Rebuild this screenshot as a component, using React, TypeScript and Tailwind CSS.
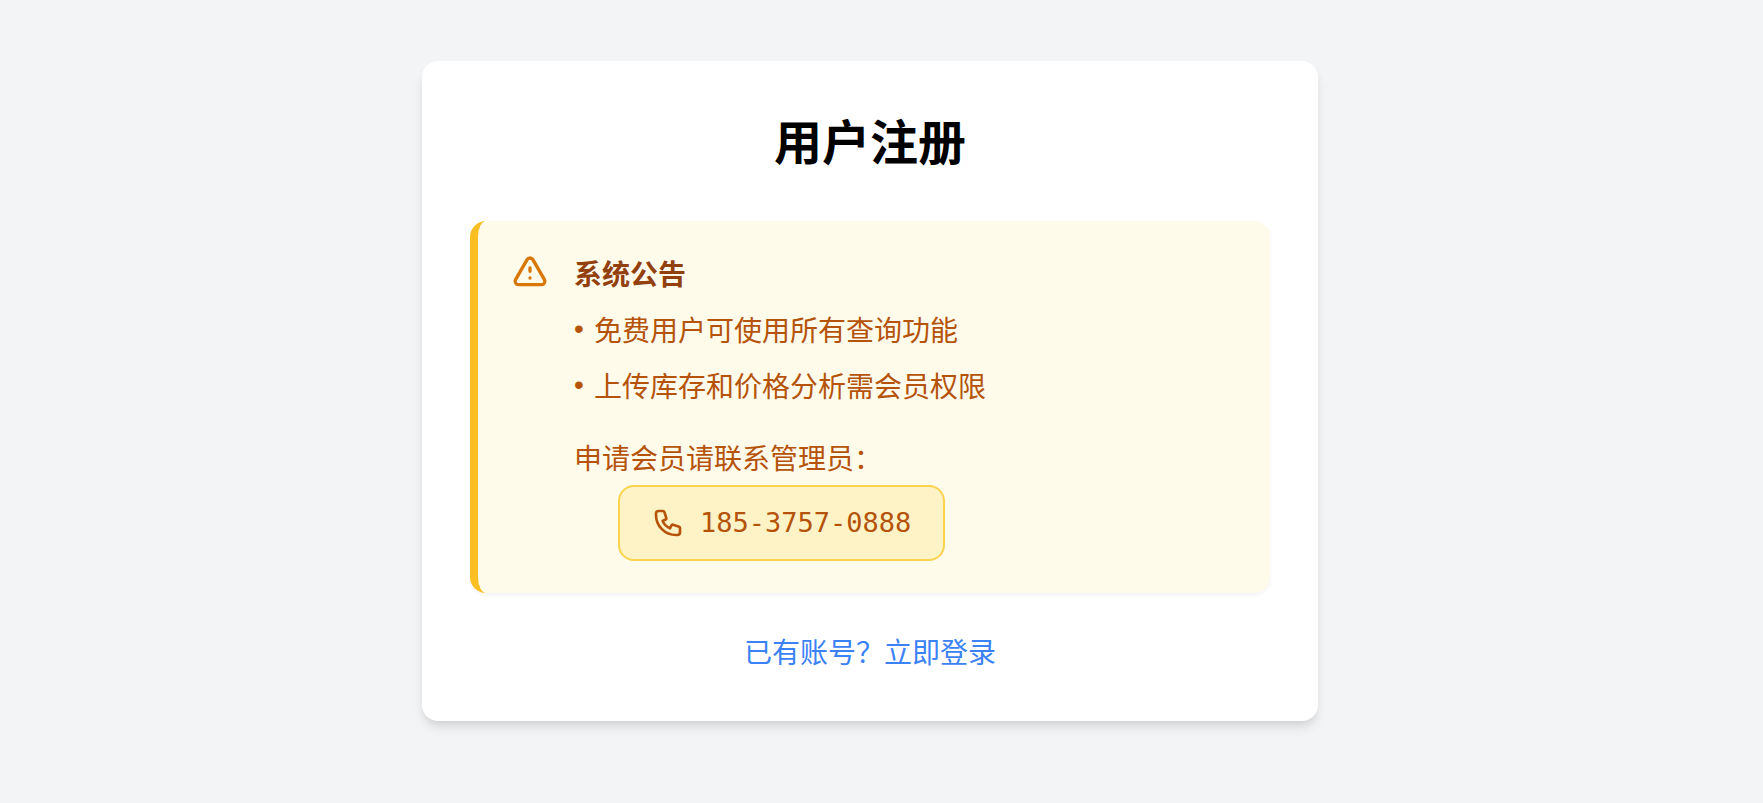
import type { ReactNode } from 'react';

const notices = ['免费用户可使用所有查询功能', '上传库存和价格分析需会员权限'];

const phone = '185-3757-0888';

function StrokeIcon({ d, className }: { d: string; className: string }) {
  return (
    <svg
      className={className}
      viewBox="0 0 24 24"
      fill="none"
      stroke="currentColor"
      strokeWidth={2}
      strokeLinecap="round"
      strokeLinejoin="round"
      aria-hidden
    >
      <path d={d} />
    </svg>
  );
}

function Notice({ title, children }: { title: string; children: ReactNode }) {
  return (
    <section className="flex gap-6 rounded-2xl border-l-8 border-[#fbbf24] bg-[#fffbeb] p-8 shadow-[0_2px_4px_0_rgba(0,0,0,0.05)]">
      <StrokeIcon
        className="size-10 shrink-0 text-[#d97706]"
        d="M12 9v2m0 4h.01m-6.938 4h13.856c1.54 0 2.502-1.667 1.732-3L13.732 4c-.77-1.333-2.694-1.333-3.464 0L3.34 16c-.77 1.333.192 3 1.732 3z"
      />
      <div className="min-w-0 flex-1 text-[28px] leading-10 text-[#b45309]">
        <h2 className="font-bold text-[#92400e]">{title}</h2>
        {children}
      </div>
    </section>
  );
}

export default function App() {
  return (
    <main className="flex min-h-screen items-center justify-center bg-[#f3f4f6] pr-[23px] pb-[21px] font-['Noto_Sans_CJK_SC',sans-serif]">
      <div className="w-full max-w-4xl rounded-2xl bg-white p-12 shadow-[0_8px_12px_-2px_rgba(0,0,0,0.1),0_4px_8px_-4px_rgba(0,0,0,0.1)]">
        <h1 className="mb-13 text-center text-5xl leading-15 font-bold text-black">用户注册</h1>

        <Notice title="系统公告">
          <ul className="mt-4 space-y-4">
            {notices.map((text) => (
              <li key={text} className="flex">
                <span className="w-5 shrink-0 font-['Liberation_Sans',sans-serif]">•</span>
                {text}
              </li>
            ))}
          </ul>
          <p className="mt-8">申请会员请联系管理员：</p>
          <a
            href={`tel:${phone}`}
            className="mt-2 ml-11 flex w-fit items-center gap-4 rounded-2xl border-2 border-[#fcd34d] bg-[#fef3c7] px-8 py-4"
          >
            <StrokeIcon
              className="size-8"
              d="M3 5a2 2 0 012-2h3.28a1 1 0 01.948.684l1.498 4.493a1 1 0 01-.502 1.21l-2.257 1.13a11.042 11.042 0 005.516 5.516l1.13-2.257a1 1 0 011.21-.502l4.493 1.498a1 1 0 01.684.949V19a2 2 0 01-2 2h-1C9.716 21 3 14.284 3 6V5z"
            />
            <span className="font-['DejaVu_Sans_Mono',monospace] text-[27px] leading-10">{phone}</span>
          </a>
        </Notice>

        <div className="mt-9 text-center text-[28px] leading-11">
          <a href="#login" className="text-[#3b82f6]">
            已有账号？立即登录
          </a>
        </div>
      </div>
    </main>
  );
}
